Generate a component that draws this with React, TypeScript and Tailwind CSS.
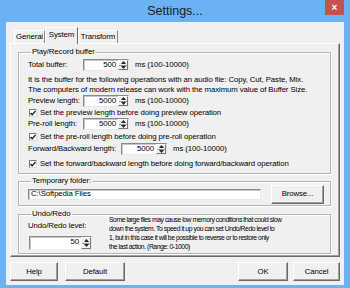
import React from "react";

function Arrow({ up }: { up?: boolean }) {
  return (
    <svg width="5" height="3" viewBox="0 0 5 3">
      <polygon points={up ? "0,3 5,3 2.5,0" : "0,0 5,0 2.5,3"} fill="#222" />
    </svg>
  );
}

function Spin({ w, value, h = "h-[12px]" }: { w: string; value: string; h?: string }) {
  return (
    <div
      className={`flex shrink-0 ${w} ${h} border border-[#8a8a8a] border-b-[#e8e8e8] border-r-[#e8e8e8] bg-white shadow-[inset_1px_1px_0_#c8c8c8]`}
    >
      <div className="flex-1 pr-[2px] text-right leading-[10px]">{value}</div>
      <div className="flex w-[10px] flex-col border border-t-white border-l-white border-r-[#777] border-b-[#777] bg-[#f0f0f0]">
        <div className="flex flex-1 items-center justify-center border-b border-[#999]">
          <Arrow up />
        </div>
        <div className="flex flex-1 items-center justify-center">
          <Arrow />
        </div>
      </div>
    </div>
  );
}

function Check({ label }: { label: string }) {
  return (
    <div className="flex items-center gap-[3px] pl-[1px]">
      <div className="flex h-[8px] w-[8px] items-center justify-center border border-[#7a7a7a] border-b-[#ddd] border-r-[#ddd] bg-white">
        <svg width="6" height="6" viewBox="0 0 6 6">
          <polyline points="0.5,3 2.2,4.8 5.5,0.8" fill="none" stroke="#111" strokeWidth="1.3" />
        </svg>
      </div>
      <span className="whitespace-nowrap">{label}</span>
    </div>
  );
}

function Btn({ w, children }: { w: string; children: React.ReactNode }) {
  return (
    <div
      className={`flex ${w} h-[19px] items-center justify-center border border-t-white border-l-white border-r-[#696969] border-b-[#696969] bg-[#f0f0f0] shadow-[inset_-1px_-1px_0_#a0a0a0]`}
    >
      {children}
    </div>
  );
}

const group =
  "border border-[#b4b4b4] shadow-[inset_1px_1px_0_#fff,1px_1px_0_#fff] min-w-0";

export default function App() {
  return (
    <div className="h-[288px] w-[350px] overflow-hidden bg-[#6ab2f1] font-['Liberation_Sans',Arial,sans-serif] text-[7.8px] leading-[10px] tracking-[-0.1px] text-black">
      <div className="relative flex h-[22px] items-center justify-center text-[12.5px] tracking-normal text-[#1c1c1c]">
        Settings...
        <div className="absolute right-[6px] top-0 flex h-[15px] w-[19px] items-center justify-center bg-[#c75050] text-[10px] font-bold text-white">
          ×
        </div>
      </div>

      <div className="ml-[6px] flex h-[263px] w-[338px] flex-col bg-[#f0f0f0] px-[4px] pt-[5px]">
        <div className="flex h-[16px] items-end pl-[4px]">
          <div className="flex h-[13px] w-[31px] items-center justify-center border border-b-0 border-t-white border-l-white border-r-[#8a8a8a]">
            General
          </div>
          <div className="relative z-10 mb-[-1px] flex h-[17px] w-[33px] items-start justify-center border border-b-0 border-t-white border-l-white border-r-[#696969] bg-[#f0f0f0] pt-[2px]">
            System
          </div>
          <div className="flex h-[13px] w-[40px] items-center justify-center border border-b-0 border-t-white border-l-white border-r-[#8a8a8a]">
            Transform
          </div>
        </div>

        <div className="flex h-[214px] flex-col border border-t-white border-l-white border-r-[#696969] border-b-[#696969] pl-[7px] pr-[8px] shadow-[inset_-1px_-1px_0_#a0a0a0]">
          <fieldset className={`${group} mt-[3px] pb-[3px] pl-[9px]`}>
            <legend className="ml-[3px] px-[1px]">Play/Record buffer</legend>
            <div className="mt-[2px] flex h-[12px] items-center">
              <span className="w-[55px] shrink-0 whitespace-nowrap">Total buffer:</span>
              <Spin w="w-[46px]" value="500" />
              <span className="ml-[6px]">ms (100-10000)</span>
            </div>
            <div className="mt-[4px] whitespace-nowrap">
              <div>It is the buffer for the following operations with an audio file: Copy, Cut, Paste, Mix.</div>
              <div>The computers of modern release can work with the maximum value of Buffer Size.</div>
            </div>
            <div className="flex h-[12px] items-center">
              <span className="w-[55px] shrink-0 whitespace-nowrap">Preview length:</span>
              <Spin w="w-[46px]" value="5000" />
              <span className="ml-[6px]">ms (100-10000)</span>
            </div>
            <div className="flex h-[11px] items-center">
              <Check label="Set the preview length before doing preview operation" />
            </div>
            <div className="flex h-[12px] items-center">
              <span className="w-[55px] shrink-0 whitespace-nowrap">Pre-roll length:</span>
              <Spin w="w-[46px]" value="5000" />
              <span className="ml-[6px]">ms (100-10000)</span>
            </div>
            <div className="mt-[1px] flex h-[12px] items-center">
              <Check label="Set the pre-roll length before doing pre-roll operation" />
            </div>
            <div className="flex h-[12px] items-center">
              <span className="w-[93px] shrink-0 whitespace-nowrap">Forward/Backward length:</span>
              <Spin w="w-[46px]" value="5000" />
              <span className="ml-[6px]">ms (100-10000)</span>
            </div>
            <div className="mt-[2px] flex h-[13px] items-center">
              <Check label="Set the forward/backward length before doing forward/backward operation" />
            </div>
          </fieldset>

          <fieldset className={`${group} mt-[2px] pb-[3px] pl-[9px]`}>
            <legend className="ml-[3px] px-[1px]">Temporary folder:</legend>
            <div className="flex h-[16px] items-center">
              <div className="flex h-[11px] w-[233px] items-center border border-[#8a8a8a] border-b-[#e8e8e8] border-r-[#e8e8e8] bg-white pl-[2px] shadow-[inset_1px_1px_0_#c8c8c8]">
                C:\Softpedia Files
              </div>
              <div className="ml-[10px]">
                <Btn w="w-[53px]">Browse...</Btn>
              </div>
            </div>
          </fieldset>

          <fieldset className={`${group} mt-[3px] pl-[9px]`}>
            <legend className="ml-[3px] px-[1px]">Undo/Redo</legend>
            <div className="flex h-[34px]">
              <div className="flex w-[81px] shrink-0 flex-col pt-[2px]">
                <span className="whitespace-nowrap">Undo/Redo level:</span>
                <div className="mt-[5px] pl-[1px]">
                  <Spin w="w-[63px]" value="50" h="h-[14px]" />
                </div>
              </div>
              <div className="mt-[-4px] whitespace-nowrap text-[6.8px] leading-[9px] tracking-[-0.45px]">
                Some large files may cause low memory conditions that could slow
                <br />
                down the system. To speed it up you can set Undo/Redo level to
                <br />
                1, but in this case it will be possible to reverse or to restore only
                <br />
                the last action. (Range: 0-1000)
              </div>
            </div>
          </fieldset>
        </div>

        <div className="mt-[5px] flex">
          <Btn w="w-[48px]">Help</Btn>
          <div className="ml-[7px]">
            <Btn w="w-[60px]">Default</Btn>
          </div>
          <div className="ml-auto">
            <Btn w="w-[50px]">OK</Btn>
          </div>
          <div className="ml-[5px]">
            <Btn w="w-[47px]">Cancel</Btn>
          </div>
        </div>
      </div>
    </div>
  );
}
